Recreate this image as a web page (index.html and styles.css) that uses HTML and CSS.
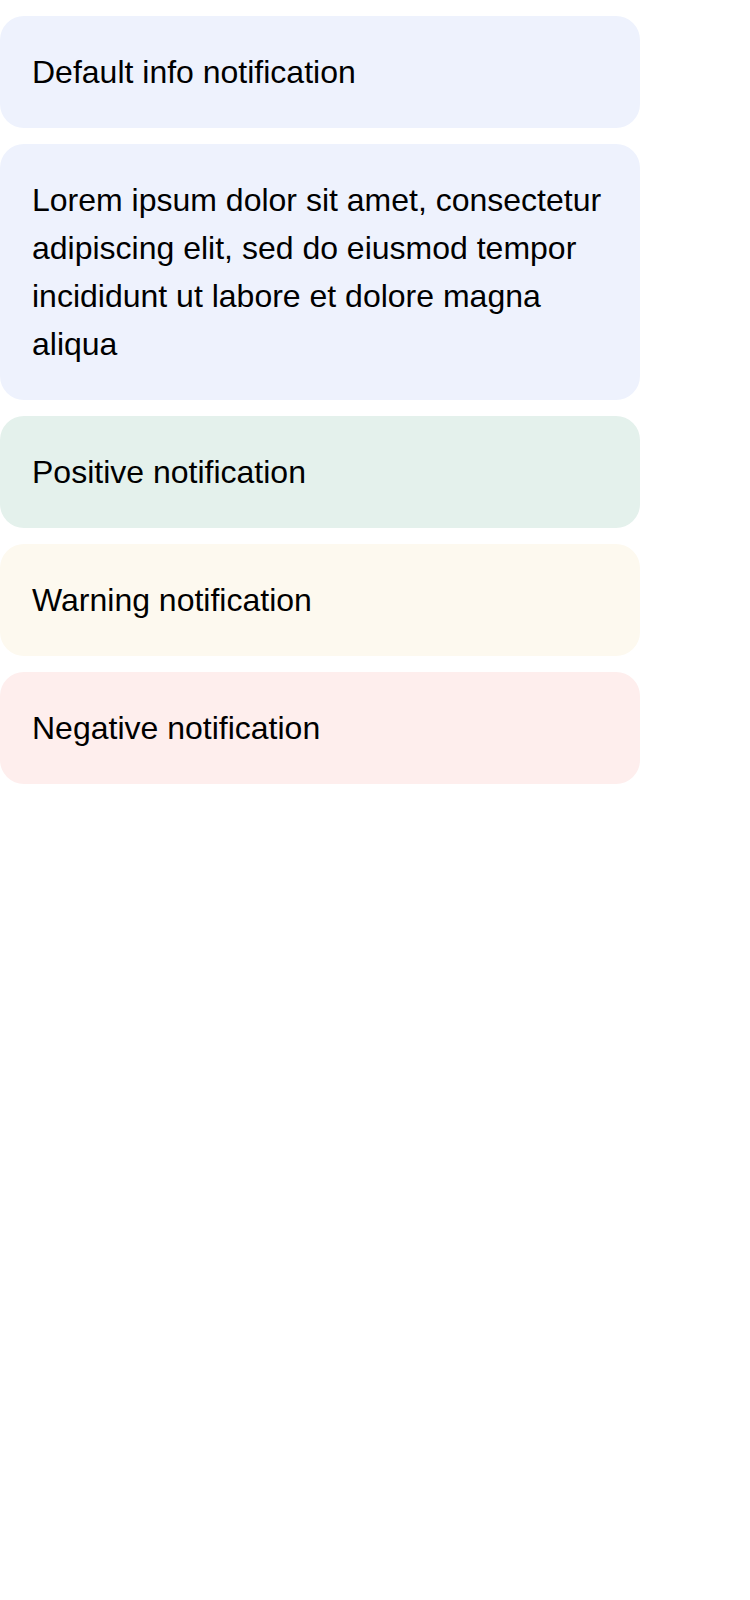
FILE: index.html
```html
<!DOCTYPE html>
<html lang="en">
<head>
<meta charset="utf-8">
<title>Notifications</title>
<link rel="stylesheet" href="styles.css">
</head>
<body>
<div class="list">
  <div class="note note-info">Default info notification</div>
  <div class="note note-info">Lorem ipsum dolor sit amet, consectetur adipiscing elit, sed do eiusmod tempor incididunt ut labore et dolore magna aliqua</div>
  <div class="note note-positive">Positive notification</div>
  <div class="note note-warning">Warning notification</div>
  <div class="note note-negative">Negative notification</div>
</div>
</body>
</html>
```
FILE: styles.css
```css
html, body {
  margin: 0;
  padding: 0;
  background: #ffffff;
}
body {
  font-family: "Liberation Sans", Arial, sans-serif;
  color: #000000;
}
.list {
  display: flex;
  flex-direction: column;
  gap: 16px;
  padding-top: 16px;
  width: 640px;
}
.note {
  padding: 32px;
  border-radius: 24px;
  font-size: 32px;
  line-height: 48px;
}
.note-info { background: #eef2fd; }
.note-positive { background: #e4f1ec; }
.note-warning { background: #fdf9ef; }
.note-negative { background: #feeeed; }
```
